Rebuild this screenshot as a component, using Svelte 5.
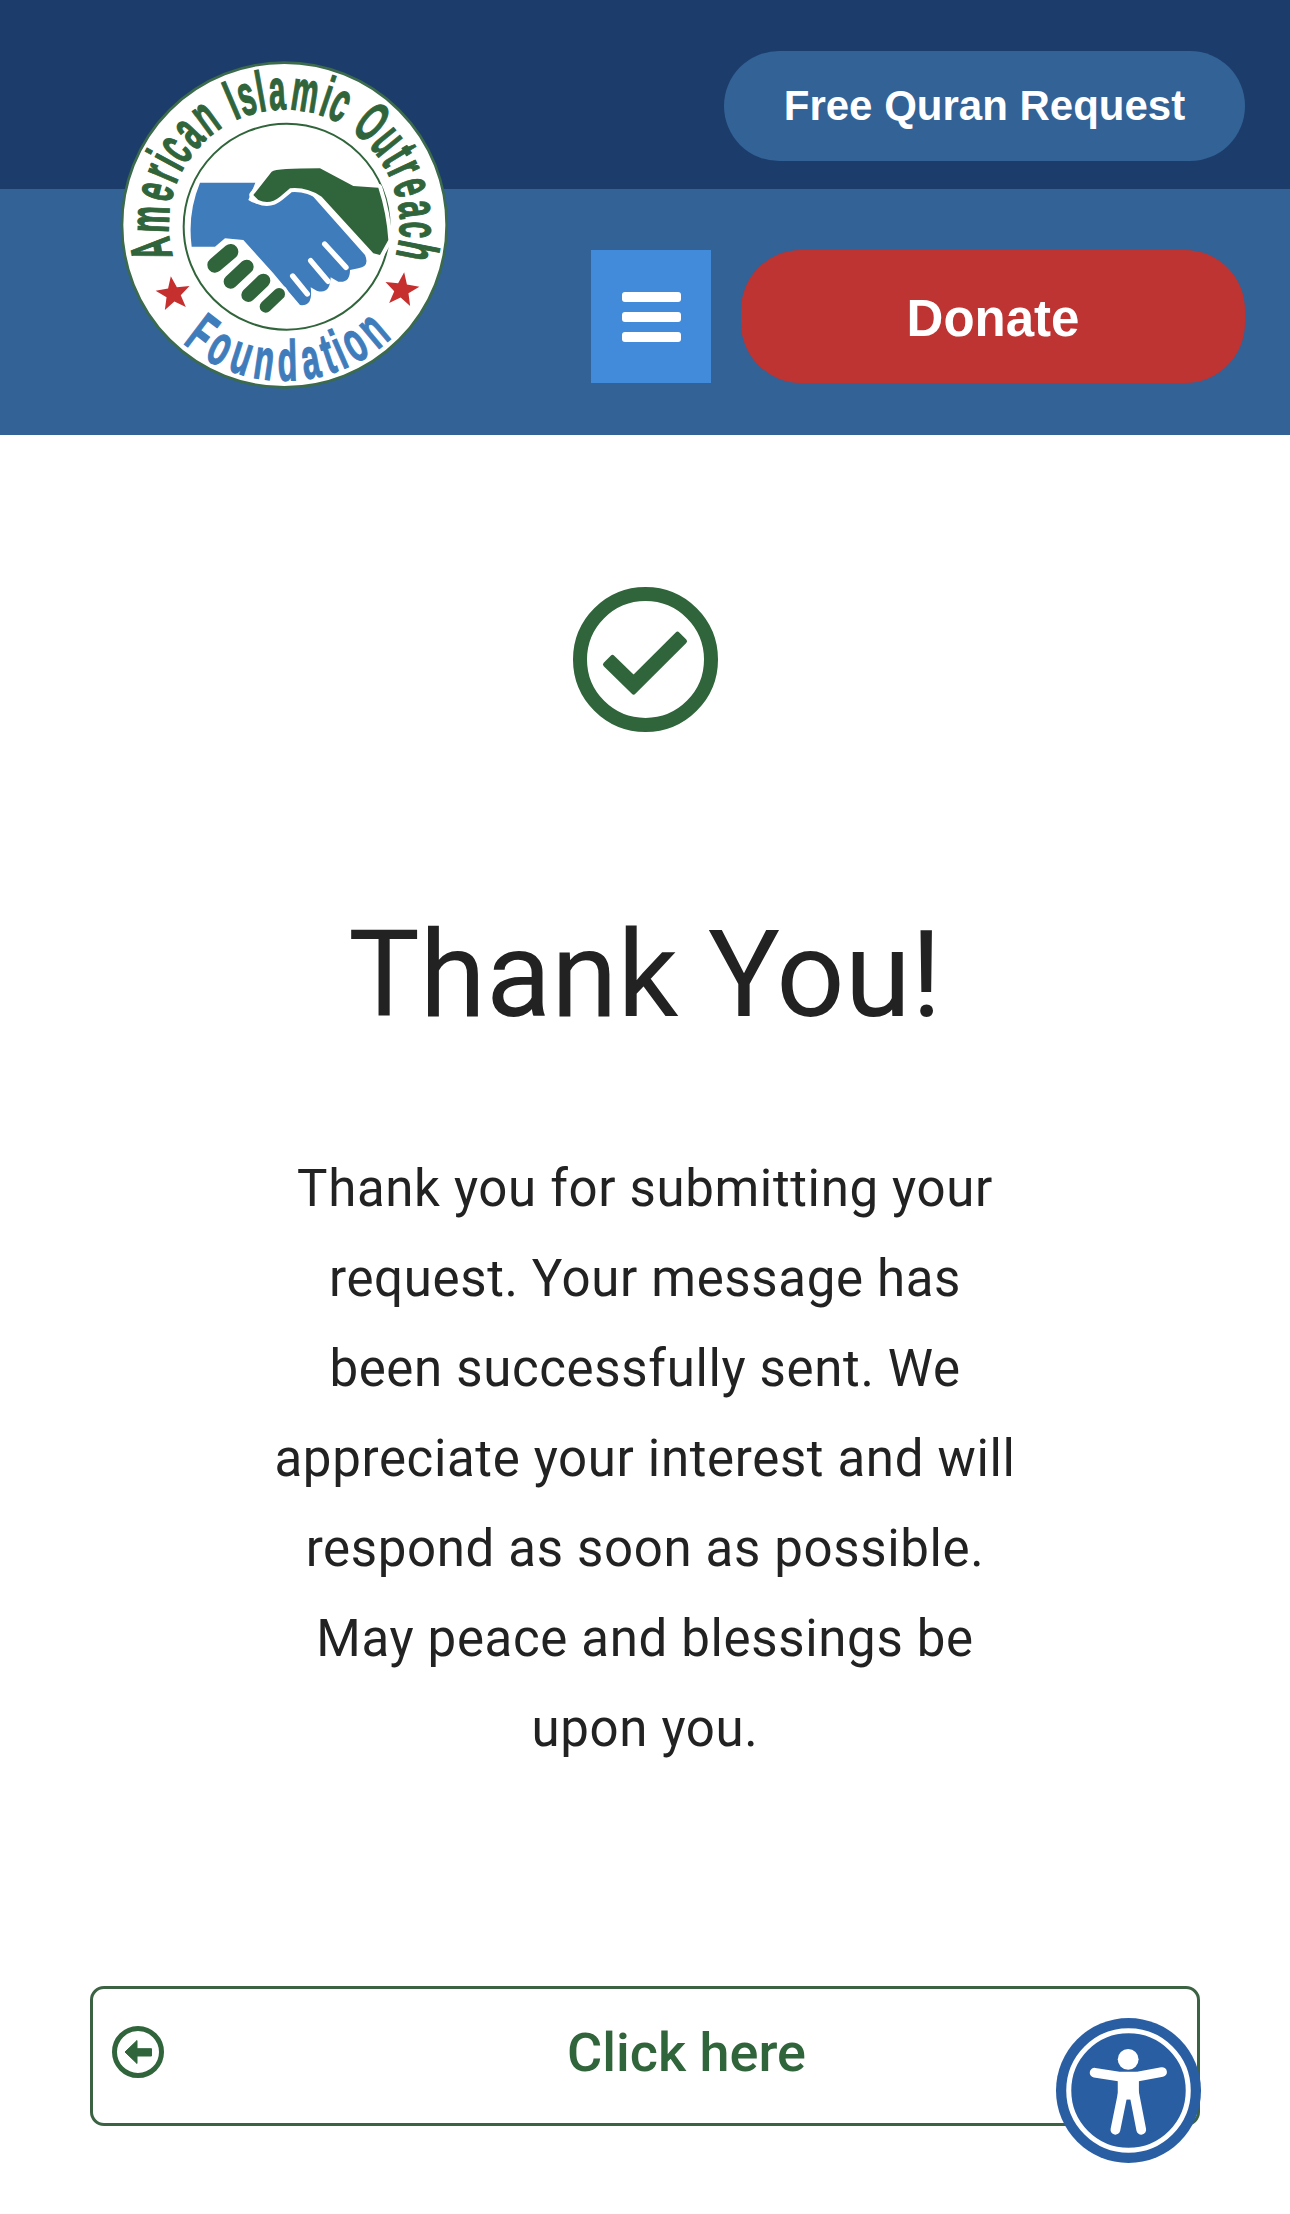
<script>
  // narrow letters get less room on the badge arc
  const widths = { i: 0.45, l: 0.45, I: 0.5, t: 0.6, r: 0.7, ' ': 0.6, m: 1.5, A: 1.15, O: 1.15, F: 1, c: 0.85, s: 0.85 };

  function arc(text, from, to) {
    const chars = [...text];
    const w = chars.map((c) => widths[c] ?? 1);
    const total = w.reduce((a, b) => a + b, 0);
    let run = 0;
    return chars.map((ch, i) => {
      const angle = from + ((run + w[i] / 2) / total) * (to - from);
      run += w[i];
      return { ch, angle };
    });
  }

  function star(cx, cy, r, rot) {
    const pts = [];
    for (let i = 0; i < 10; i++) {
      const rad = i % 2 ? r * 0.42 : r;
      const a = ((rot + i * 36 - 90) * Math.PI) / 180;
      pts.push(`${(cx + rad * Math.cos(a)).toFixed(1)},${(cy + rad * Math.sin(a)).toFixed(1)}`);
    }
    return pts.join(' ');
  }

  const top = arc('American Islamic Outreach', -106, 106);
  const bottom = arc('Foundation', 42, -45);

  const message =
    'Thank you for submitting your request. Your message has been successfully sent. We appreciate your interest and will respond as soon as possible. May peace and blessings be upon you.';
</script>

<header class="site-header">
  <div class="top-band">
    <a class="quran-btn" href="#quran">Free Quran Request</a>
  </div>
  <div class="nav-band">
    <button class="menu-btn" aria-label="Menu">
      <span></span>
      <span></span>
      <span></span>
    </button>
    <a class="donate-btn" href="#donate">Donate</a>
  </div>

  <svg class="logo" viewBox="0 0 1140 1110" aria-label="American Islamic Outreach Foundation">
    <circle cx="553" cy="555" r="487" fill="#fff" stroke="#3b6a4c" stroke-width="8" />
    <circle cx="560" cy="560" r="309" fill="none" stroke="#30643a" stroke-width="6" />

    {#each top as l}
      <text
        class="logo-text"
        fill="#30643a"
        stroke="#30643a"
        transform="rotate({l.angle} 553 555) translate(553 208) scale(0.52 1)">{l.ch}</text>
    {/each}
    {#each bottom as l}
      <text
        class="logo-text"
        fill="#3f7cbb"
        stroke="#3f7cbb"
        transform="rotate({l.angle} 553 555) translate(553 1022) scale(0.56 1)">{l.ch}</text>
    {/each}

    <polygon points={star(220, 762, 54, -8)} fill="#c5302f" />
    <polygon points={star(905, 750, 54, 8)} fill="#c5302f" />

    <!-- blue hand -->
    <path
      fill="#3f7cbb"
      d="M300 428 H466 L445 480 Q480 505 530 480 L570 455 Q610 445 640 470 L795 645 Q810 680 775 685 L750 690 Q750 730 715 725 L692 712 Q690 765 650 752 L632 742 Q640 800 600 795 L570 760 L520 700 L430 600 L375 595 L345 620 H275 Q262 520 300 428Z"
    />
    <g stroke="#fff" stroke-width="16" stroke-linecap="round">
      <line x1="674" y1="612" x2="738" y2="682" />
      <line x1="632" y1="662" x2="684" y2="724" />
      <line x1="578" y1="708" x2="622" y2="762" />
    </g>
    <!-- green hand -->
    <path
      fill="#30643a"
      stroke="#fff"
      stroke-width="24"
      paint-order="stroke"
      stroke-linejoin="round"
      d="M515 395 Q530 385 660 385 L760 438 L835 443 Q860 520 865 600 L840 645 L820 640 L665 470 Q620 440 570 445 L540 470 Q510 495 475 480 L460 465Z"
    />
    <g stroke-linecap="round">
      <g stroke="#fff">
        <line x1="345" y1="675" x2="392" y2="635" stroke-width="68" />
        <line x1="392" y1="725" x2="440" y2="680" stroke-width="62" />
        <line x1="445" y1="765" x2="490" y2="722" stroke-width="62" />
        <line x1="497" y1="800" x2="537" y2="762" stroke-width="56" />
      </g>
      <g stroke="#30643a">
        <line x1="345" y1="675" x2="392" y2="635" stroke-width="46" />
        <line x1="392" y1="725" x2="440" y2="680" stroke-width="42" />
        <line x1="445" y1="765" x2="490" y2="722" stroke-width="42" />
        <line x1="497" y1="800" x2="537" y2="762" stroke-width="36" />
      </g>
    </g>
  </svg>
</header>

<main class="thanks">
  <svg class="check" viewBox="0 0 145 145" aria-hidden="true">
    <circle cx="72.5" cy="72.5" r="65.5" fill="none" stroke="#30643a" stroke-width="14" />
    <polygon
      points="39.5,70.5 60.6,91 104.5,47.2 111.5,54.2 60.6,105 32.5,77.5"
      fill="#30643a"
      stroke="#30643a"
      stroke-width="5"
      stroke-linejoin="round"
    />
  </svg>

  <h1>Thank You!</h1>
  <p>{message}</p>

  <a class="back-btn" href="#home">
    <svg class="back-icon" viewBox="0 0 52 52" aria-hidden="true">
      <circle cx="26" cy="26" r="23.5" fill="none" stroke="#30643a" stroke-width="5" />
      <path d="M13 26 L25 14.5 V22.7 H39.5 V30 H25 V37.5Z" fill="#30643a" stroke="#30643a" stroke-width="1" stroke-linejoin="round" />
    </svg>
    <span>Click here</span>
  </a>
</main>

<button class="a11y" aria-label="Accessibility options">
  <svg viewBox="108 145 432 432" aria-hidden="true">
    <circle cx="324" cy="361" r="216" fill="#2a5ea3" />
    <circle cx="324" cy="361" r="178" fill="none" stroke="#fff" stroke-width="15" />
    <circle cx="323" cy="268" r="31" fill="#fff" />
    <g stroke="#fff" stroke-width="29" stroke-linecap="round" stroke-linejoin="round" fill="none">
      <path d="M223 308 L300 320 H348 L424 306" />
      <path d="M307 370 L285 478" />
      <path d="M341 370 L362 478" />
    </g>
    <rect x="292" y="318" width="63" height="70" fill="#fff" />
  </svg>
</button>

<style>
  :global(body) {
    background: #fff;
  }

  .site-header {
    position: relative;
  }

  .top-band {
    height: 189px;
    box-sizing: border-box;
    padding: 51px 45px 0 0;
    background: #1c3d6b;
    display: flex;
    justify-content: flex-end;
    align-items: flex-start;
  }

  .nav-band {
    height: 246px;
    box-sizing: border-box;
    padding: 61px 45px 0 0;
    background: #326296;
    display: flex;
    justify-content: flex-end;
    align-items: flex-start;
    gap: 30px;
  }

  .quran-btn,
  .donate-btn {
    display: flex;
    align-items: center;
    justify-content: center;
    color: #fff;
    font-family: 'Liberation Sans', Arial, sans-serif;
    font-weight: 700;
    text-decoration: none;
  }

  .quran-btn {
    width: 521px;
    height: 110px;
    border-radius: 55px;
    background: #326296;
    font-size: 42px;
  }

  .donate-btn {
    width: 504px;
    height: 133px;
    box-sizing: border-box;
    padding-top: 3px;
    border-radius: 60px;
    background: #bd3432;
    font-size: 51px;
  }

  .menu-btn {
    width: 120px;
    height: 133px;
    border: 0;
    padding: 0;
    background: #428bdb;
    display: flex;
    flex-direction: column;
    align-items: center;
    justify-content: center;
    gap: 10px;
  }

  .menu-btn span {
    width: 59px;
    height: 10px;
    border-radius: 3px;
    background: #fff;
  }

  .logo {
    position: absolute;
    left: 100px;
    top: 40px;
    width: 380px;
    height: 370px;
  }

  .logo-text {
    font-family: 'Liberation Sans', Arial, sans-serif;
    font-weight: 700;
    font-size: 172px;
    stroke-width: 4px;
    text-anchor: middle;
  }

  .thanks {
    display: flex;
    flex-direction: column;
    align-items: center;
    padding: 152px 90px 0;
    color: #222;
    font-family: Roboto, sans-serif;
  }

  .check {
    width: 145px;
    height: 145px;
    display: block;
  }

  h1 {
    margin: 171px 0 0;
    font-size: 120px;
    font-weight: 400;
    line-height: 1.2;
  }

  p {
    margin: 97px 0 0;
    width: 744px;
    font-size: 51px;
    line-height: 90px;
    text-align: center;
    letter-spacing: 0.65px;
  }

  .back-btn {
    margin-top: 212px;
    align-self: stretch;
    height: 140px;
    box-sizing: border-box;
    border: 3px solid #3b6343;
    border-radius: 14px;
    padding: 0 0 8px 19px;
    display: flex;
    align-items: center;
    color: #30643a;
    text-decoration: none;
  }

  .back-icon {
    width: 52px;
    height: 52px;
    flex: none;
    margin-right: 12px;
  }

  .back-btn span {
    flex: 1;
    text-align: center;
    font-size: 54px;
    font-weight: 500;
  }

  .a11y {
    position: absolute;
    left: 1056px;
    top: 2018px;
    width: 145px;
    height: 145px;
    padding: 0;
    border: 0;
    background: none;
  }

  .a11y svg {
    display: block;
    width: 100%;
    height: 100%;
  }
</style>
